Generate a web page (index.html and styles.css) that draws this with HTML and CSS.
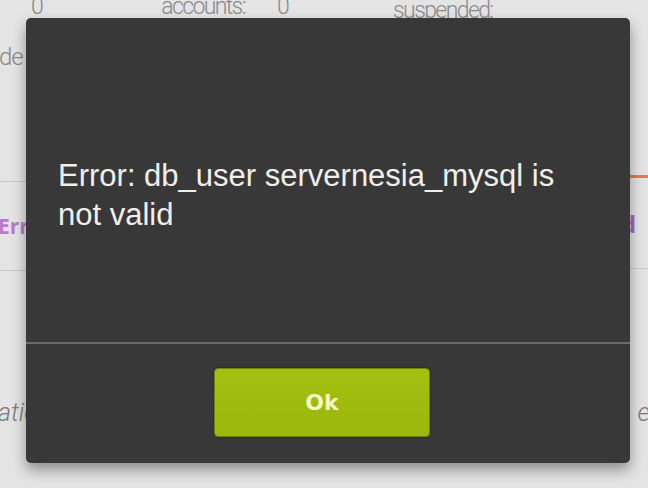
FILE: index.html
```html
<!DOCTYPE html>
<html>
<head>
<meta charset="utf-8">
<link rel="stylesheet" href="styles.css">
</head>
<body>
<div class="page">
  <div class="stats">
    <span class="stat-a">0</span>
    <span class="stat-b">accounts:</span>
    <span class="stat-c">0</span>
    <span class="stat-d">suspended:</span>
  </div>
  <div class="row-de">de</div>
  <div class="tabs">
    <div class="tab-left"><span class="purple">Err</span></div>
    <div class="tab-right"><span class="purple">d</span></div>
  </div>
  <div class="notes">
    <span class="note-left">atio</span>
    <span class="note-right">e</span>
  </div>
</div>

<div class="dialog">
  <div class="message">Error: db_user servernesia_mysql is not valid</div>
  <div class="footer">
    <button class="ok">Ok</button>
  </div>
</div>
</body>
</html>
```
FILE: styles.css
```css
html, body {
  margin: 0;
  padding: 0;
}
body {
  width: 648px;
  height: 488px;
  overflow: hidden;
  background: #e4e4e4;
  position: relative;
  font-family: Roboto, "Liberation Sans", sans-serif;
}
.page {
  display: flex;
  flex-direction: column;
  color: #8a8a8a;
  font-weight: 300;
}
.stats {
  display: flex;
  align-items: flex-start;
  height: 28px;
  margin-top: -7px;
  font-size: 23px;
  line-height: 28px;
  letter-spacing: -1.6px;
}
.stat-a { margin-left: 31px; }
.stat-b { margin-left: 119px; }
.stat-c { margin-left: 32px; }
.stat-d { margin-left: 105px; margin-top: 4px; }
.row-de {
  font-size: 24px;
  line-height: 28px;
  margin-top: 22px;
  margin-left: -1px;
  letter-spacing: -1px;
}
.tabs {
  display: flex;
  justify-content: space-between;
  margin-top: 106px;
}
.tab-left {
  width: 30px;
  height: 90px;
  box-sizing: border-box;
  border-top: 1px solid #c8c8c8;
  border-bottom: 1px solid #c8c8c8;
  margin-top: 4px;
  display: flex;
  align-items: center;
}
.tab-right {
  width: 30px;
  height: 94px;
  box-sizing: border-box;
  border-top: 3px solid #e27a55;
  border-bottom: 1px solid #c8c8c8;
  display: flex;
  align-items: center;
  padding-left: 3px;
  margin-top: -2px;
}
.purple {
  color: #a866c0;
  font-family: "Open Sans", "Liberation Sans", sans-serif;
  font-weight: 700;
  font-size: 21px;
  margin-left: -2px;
}
.tab-left .purple { color: #b97bcc; }
.tab-right .purple { margin-left: 0; font-size: 24px; }
.notes {
  display: flex;
  justify-content: space-between;
  margin-top: 127px;
  font-style: italic;
  font-size: 25px;
  color: #7a7a7a;
}
.note-left { margin-left: -2px; }
.note-right { margin-right: -2px; }

.dialog {
  position: absolute;
  left: 26px;
  top: 18px;
  width: 604px;
  height: 445px;
  background: #393838;
  border-radius: 5px;
  box-shadow: 0 7px 14px rgba(0, 0, 0, 0.38);
  display: flex;
  flex-direction: column;
  box-sizing: border-box;
}
.message {
  height: 326px;
  flex: none;
  box-sizing: border-box;
  padding: 138px 40px 0 32px;
  font-family: "Liberation Sans", Arial, sans-serif;
  font-size: 31px;
  line-height: 39px;
  color: #f0efec;
  border-bottom: 2px solid #6a6a6a;
}
.footer {
  display: flex;
  padding-top: 24px;
  padding-left: 188px;
}
.ok {
  width: 216px;
  height: 69px;
  background: linear-gradient(#a3bf10, #9bb70b);
  border: 1px solid #6f8408;
  border-radius: 4px;
  box-shadow: 0 0 2px rgba(0,0,0,0.5);
  color: #f5f7c4;
  font-family: "DejaVu Sans", Verdana, sans-serif;
  font-weight: 700;
  font-size: 22px;
  padding: 0;
  margin: 0;
}
```
